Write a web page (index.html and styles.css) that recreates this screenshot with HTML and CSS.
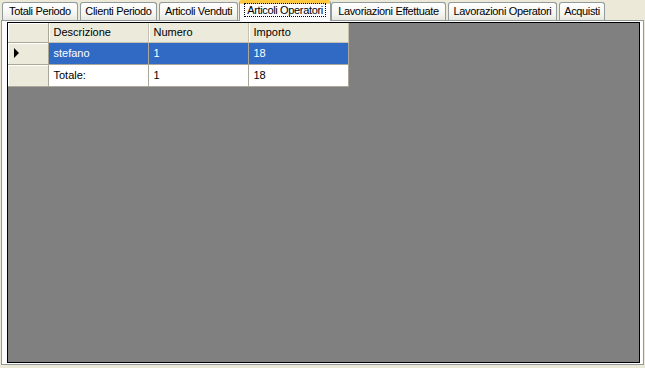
FILE: index.html
```html
<!DOCTYPE html>
<html lang="it">
<head>
    <meta charset="UTF-8">
    <title>Statistiche</title>
    <link rel="stylesheet" href="styles.css">
</head>
<body>

    <div class="tabs">
        <div class="tab w1">Totali Periodo</div>
        <div class="tab w2">Clienti Periodo</div>
        <div class="tab w3">Articoli Venduti</div>
        <div class="tab active w4"><span class="focus">Articoli Operatori</span></div>
        <div class="tab w5">Lavoriazioni Effettuate</div>
        <div class="tab w6">Lavorazioni Operatori</div>
        <div class="tab w7">Acquisti</div>
    </div>

    <div class="tab-page">
        <div class="grid">
            <table>
                <tr>
                    <th class="row-head"></th>
                    <th>Descrizione</th>
                    <th>Numero</th>
                    <th>Importo</th>
                </tr>
                <tr class="selected">
                    <td class="row-head"><span class="arrow"></span></td>
                    <td>stefano</td>
                    <td>1</td>
                    <td>18</td>
                </tr>
                <tr>
                    <td class="row-head"></td>
                    <td>Totale:</td>
                    <td>1</td>
                    <td>18</td>
                </tr>
            </table>
        </div>
    </div>

</body>
</html>
```

FILE: styles.css
```css
body {
    margin: 0;
    background: #ECE9D8;
    font-family: 'Liberation Sans', Arial, sans-serif;
    font-size: 11px;
    color: #000;
    width: 645px;
    height: 368px;
    overflow: hidden;
}

.tabs {
    display: flex;
    align-items: flex-end;
    height: 20px;
    padding-left: 2px;
}

.tab {
    box-sizing: border-box;
    height: 18px;
    margin-right: 2px;
    border: 1px solid #919B9C;
    border-bottom: none;
    border-radius: 3px 3px 0 0;
    background: linear-gradient(to bottom, #FFFFFF, #F3F3EF 70%, #E7E6DF);
    text-align: center;
    line-height: 16px;
    letter-spacing: -0.35px;
    white-space: nowrap;
}

.tab.active {
    position: relative;
    height: 21px;
    margin: 0 0 -1px -1px;
    border-top: 3px solid #FFC83C;
    box-shadow: inset 0 1px 0 #F8D978;
    background: #FCFCFE;
    line-height: 15px;
    z-index: 1;
}

.tab.active::before {
    content: "";
    position: absolute;
    left: 0;
    right: 0;
    top: -4px;
    border-top: 1px solid #E68B2C;
    border-radius: 3px 3px 0 0;
}

.focus {
    outline: 1px dotted #000;
    padding: 0 2px;
}

.w1 { width: 76px; }
.w2 { width: 77px; }
.w3 { width: 79px; }
.w4 { width: 92px; }
.w5 { width: 115px; }
.w6 { width: 109px; }
.w7 { width: 46px; }

.tab-page {
    box-sizing: border-box;
    margin-left: 1px;
    width: 643px;
    height: 345px;
    border: 1px solid #919B9C;
    background: #FCFCFE;
    padding: 1px 3px 2px 5px;
}

.grid {
    box-sizing: border-box;
    height: 341px;
    background: #808080;
    border: 1px solid #000;
    box-shadow: 1px 1px 0 #FFF;
}

table {
    border-collapse: collapse;
    table-layout: fixed;
}

th, td {
    box-sizing: border-box;
    width: 100px;
    padding: 0 0 0 5px;
    text-align: left;
    font-weight: normal;
    white-space: nowrap;
}

th {
    height: 19px;
    background: #EBEADB;
    border-right: 1px solid #C5C2B2;
    border-bottom: 1px solid #C5C2B2;
    box-shadow: inset 1px 0 0 #FFF;
}

td {
    height: 22px;
    background: #FFF;
    border-right: 1px solid #ACA899;
    border-bottom: 1px solid #ACA899;
}

.row-head {
    width: 40px;
    padding: 0;
    background: #EBEADB;
    border-right: 1px solid #ACA899;
    border-bottom: 1px solid #ACA899;
    box-shadow: inset 1px 1px 0 #FFF;
}

.selected td {
    background: #316AC5;
    color: #FFF;
}

.selected td.row-head {
    background: #EBEADB;
}

.arrow {
    display: block;
    width: 0;
    height: 0;
    margin-left: 6px;
    border-top: 5px solid transparent;
    border-bottom: 5px solid transparent;
    border-left: 5px solid #000;
}
```
